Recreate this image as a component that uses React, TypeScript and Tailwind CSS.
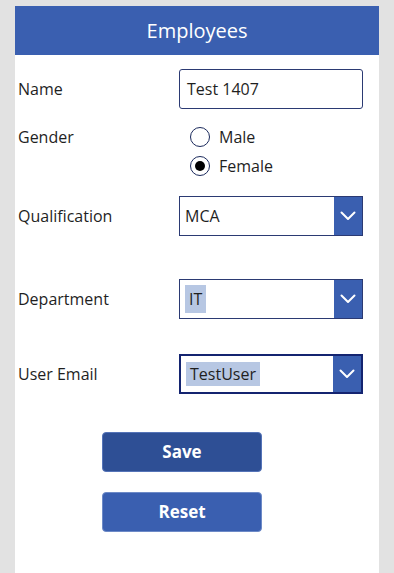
import React from 'react';

const font = { fontFamily: '"Open Sans", "Noto Sans", sans-serif' };

const Chevron = () => (
  <svg width="16" height="10" viewBox="0 0 16 10" fill="none">
    <path d="M1.5 1.5 L8 8 L14.5 1.5" stroke="white" strokeWidth="2" strokeLinecap="round" strokeLinejoin="round" />
  </svg>
);

const Label = ({ children }: { children: React.ReactNode }) => (
  <div className="w-[161px] shrink-0 text-[16px] text-[#1f1f1f]">{children}</div>
);

const Dropdown = ({
  value,
  highlight,
  focused,
}: {
  value: string;
  highlight?: boolean;
  focused?: boolean;
}) => (
  <div
    className={
      focused
        ? 'flex h-[40px] w-[184px] items-stretch border-2 border-[#142470] bg-white'
        : 'flex h-[40px] w-[184px] items-stretch border border-[#2b3a73] bg-white'
    }
  >
    <div className="flex flex-1 items-center pl-[5px]">
      {highlight ? (
        <span className={focused ? 'bg-[#b7c7e3] px-[4px] leading-[24px] text-[16px] text-[#1f1f1f]' : 'bg-[#b7c7e3] px-[4px] leading-[28px] text-[16px] text-[#1f1f1f]'}>
          {value}
        </span>
      ) : (
        <span className="text-[16px] text-[#1f1f1f]">{value}</span>
      )}
    </div>
    <div className="flex w-[28px] items-center justify-center bg-[#3a5fb0]">
      <Chevron />
    </div>
  </div>
);

const Radio = ({ label, checked }: { label: string; checked?: boolean }) => (
  <div className="flex h-[20px] items-center">
    <div className="flex h-[20px] w-[20px] items-center justify-center rounded-full border-[1.5px] border-[#1b2a5c] bg-white">
      {checked && <div className="h-[10px] w-[10px] rounded-full bg-black" />}
    </div>
    <span className="ml-[9px] text-[16px] text-[#1f1f1f]">{label}</span>
  </div>
);

export default function App() {
  return (
    <div className="min-h-[573px] bg-[#e2e2e2] pt-[6px]" style={font}>
      <div className="mx-[15px] min-h-[567px] w-[364px] bg-white">
        <div className="flex h-[49px] items-center justify-center bg-[#3a5fb0] text-[20px] text-white">
          Employees
        </div>

        <div className="pl-[3px]">
          <div className="mt-[14px] flex h-[40px] items-center">
            <Label>Name</Label>
            <div className="flex h-[40px] w-[184px] items-center rounded-[3px] border border-[#2b3a73] pl-[7px] text-[16px] text-[#1f1f1f]">
              Test 1407
            </div>
          </div>

          <div className="mt-[18px] flex">
            <div className="flex h-[20px] items-center">
              <Label>Gender</Label>
            </div>
            <div className="ml-[11px] flex flex-col gap-[9px]">
              <Radio label="Male" />
              <Radio label="Female" checked />
            </div>
          </div>

          <div className="mt-[20px] flex h-[40px] items-center">
            <Label>Qualification</Label>
            <Dropdown value="MCA" />
          </div>

          <div className="mt-[43px] flex h-[40px] items-center">
            <Label>Department</Label>
            <Dropdown value="IT" highlight />
          </div>

          <div className="mt-[35px] flex h-[40px] items-center">
            <Label>User Email</Label>
            <Dropdown value="TestUser" highlight focused />
          </div>
        </div>

        <div className="mt-[38px] flex flex-col items-start pl-[87px]">
          <button className="h-[40px] w-[160px] rounded-[4px] border border-[#5574b8] bg-[#2e4f95] text-[17px] font-bold text-white">
            Save
          </button>
          <button className="mt-[20px] h-[40px] w-[160px] rounded-[4px] border border-[#6d8ac7] bg-[#3a5fb0] text-[17px] font-bold text-white">
            Reset
          </button>
        </div>
      </div>
    </div>
  );
}
